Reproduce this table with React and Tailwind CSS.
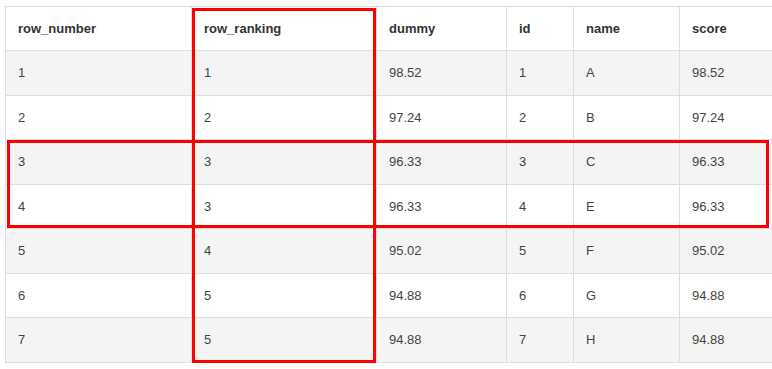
const columns = [
  { key: 'row_number', width: 186 },
  { key: 'row_ranking', width: 185 },
  { key: 'dummy', width: 130 },
  { key: 'id', width: 67 },
  { key: 'name', width: 106 },
  { key: 'score', width: 120 },
];

const rows = [
  [1, 1, '98.52', 1, 'A', '98.52'],
  [2, 2, '97.24', 2, 'B', '97.24'],
  [3, 3, '96.33', 3, 'C', '96.33'],
  [4, 3, '96.33', 4, 'E', '96.33'],
  [5, 4, '95.02', 5, 'F', '95.02'],
  [6, 5, '94.88', 6, 'G', '94.88'],
  [7, 5, '94.88', 7, 'H', '94.88'],
];

export default function App() {
  return (
    <div
      className="relative w-[772px] h-[369px] overflow-hidden bg-white pl-[5px] pt-[6px]"
      style={{ fontFamily: '"Liberation Sans", Arial, sans-serif' }}
    >
      <table className="table-fixed border-collapse border border-[#ddd] text-[13px] w-[794px]">
        <colgroup>
          {columns.map((c) => (
            <col key={c.key} style={{ width: c.width }} />
          ))}
        </colgroup>
        <thead>
          <tr className="h-[44px]">
            {columns.map((c) => (
              <th key={c.key} className="border border-[#ddd] px-[12px] text-left font-bold text-[#333]">
                {c.key}
              </th>
            ))}
          </tr>
        </thead>
        <tbody>
          {rows.map((row, i) => (
            <tr key={i} className={`h-[44.5px] ${i % 2 === 0 ? 'bg-[#f4f4f4]' : 'bg-white'}`}>
              {row.map((cell, j) => (
                <td key={j} className="border border-[#ddd] px-[12px] text-[#444]">
                  {cell}
                </td>
              ))}
            </tr>
          ))}
        </tbody>
      </table>

      {/* highlight boxes */}
      <div className="absolute left-[192px] top-[8px] w-[184px] h-[355px] border-[3px] border-[#ff0000]" />
      <div className="absolute left-[7px] top-[140px] w-[762px] h-[88px] border-[3px] border-[#ff0000]" />
    </div>
  );
}
